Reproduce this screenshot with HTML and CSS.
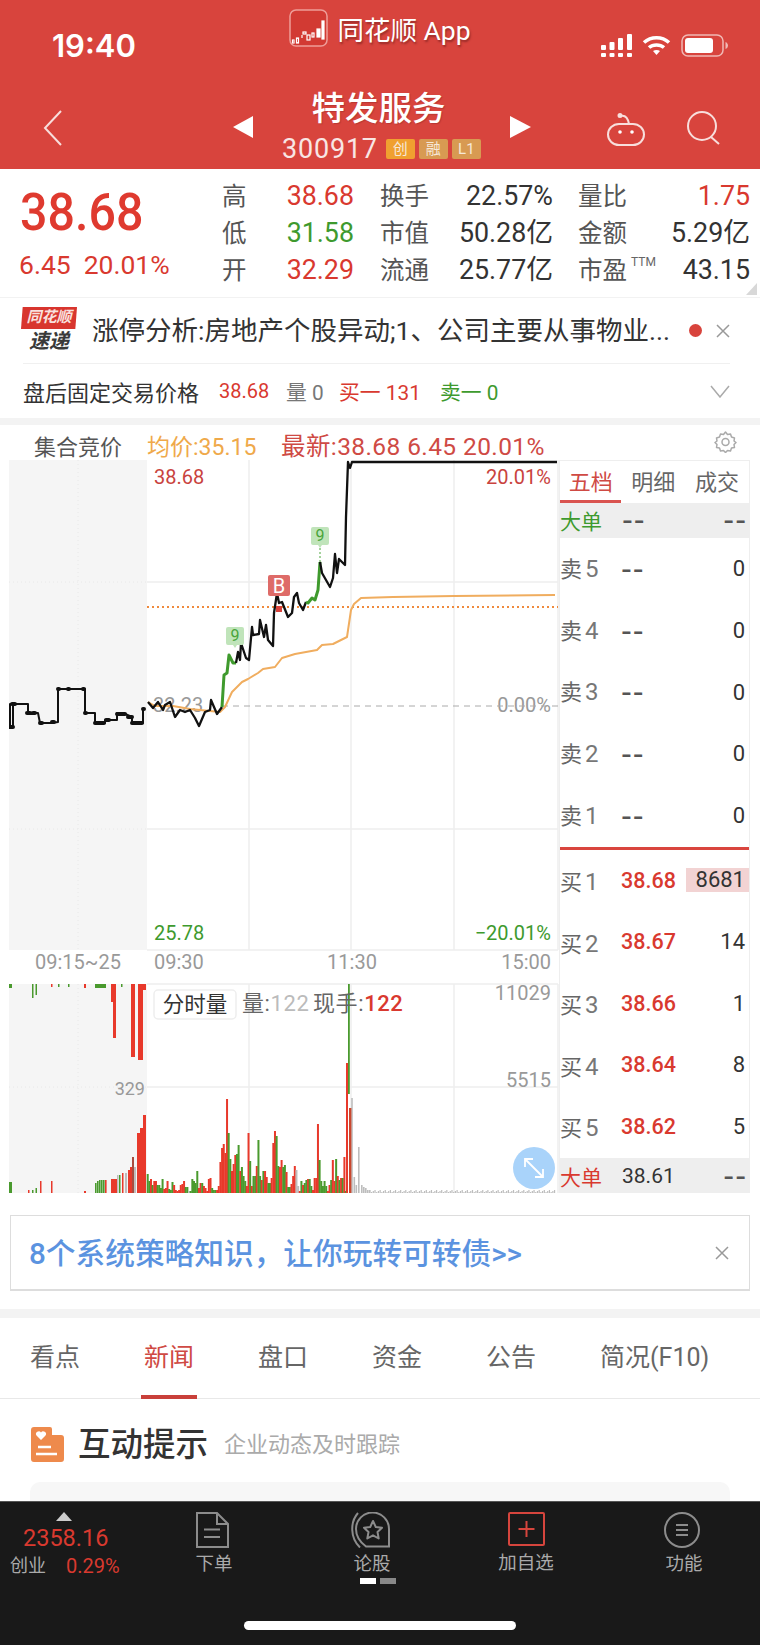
FILE: index.html
```html
<!DOCTYPE html>
<html lang="zh-CN">
<head>
    <meta charset="UTF-8">
    <meta name="viewport" content="width=device-width, initial-scale=1.0">
    <title>特发服务 300917</title>
    <link rel="stylesheet" href="styles.css">
</head>
<body>
    <header class="header">
        <div class="status">
            <div class="time">19:40</div>
            <div class="app-name">
                <svg class="app-logo" width="39" height="38" viewBox="0 0 39 38">
                    <rect x="1" y="1" width="37" height="36" rx="6" fill="#d23a33" stroke="#ee9d98" stroke-width="1.5"/>
                    <g fill="none" stroke="#fff" stroke-width="1.2">
                        <rect x="3.5" y="31" width="1.5" height="3"/>
                        <rect x="7.5" y="29" width="2" height="5"/>
                        <path d="M13 26v3"/>
                        <rect x="14" y="23" width="3" height="2"/>
                        <rect x="18" y="26" width="3" height="5"/>
                        <rect x="23" y="24" width="2" height="4"/>
                        <rect x="28" y="20" width="3" height="8" fill="#fff"/>
                        <rect x="33" y="12" width="2" height="18" fill="#fff"/>
                    </g>
                </svg>
                <span>同花顺 App</span>
            </div>
            <div class="status-icons">
                <svg width="31" height="23" viewBox="0 0 31 23" fill="#fff">
                    <rect x="0" y="11" width="5" height="5" rx="1"/>
                    <rect x="8.500" y="8" width="5" height="8" rx="1"/>
                    <rect x="17" y="4" width="5" height="12" rx="1"/>
                    <rect x="26" y="0" width="5" height="16" rx="1"/>
                    <rect x="0" y="19" width="5" height="4" rx="1"/>
                    <rect x="8.500" y="19" width="5" height="4" rx="1"/>
                    <rect x="17" y="19" width="5" height="4" rx="1"/>
                    <rect x="26" y="19" width="5" height="4" rx="1"/>
                </svg>
                <svg width="29" height="21" viewBox="0 0 29 21" fill="none" stroke="#fff" stroke-width="3.500">
                    <path d="M2 7.500c7-6.500 18-6.500 25 0"/>
                    <path d="M7 12.500c4-3.500 11-3.500 15 0"/>
                    <path d="M14.500 20l-3.500-4c2-1.500 5-1.500 7 0z" fill="#fff" stroke="none"/>
                </svg>
                <svg width="47" height="23" viewBox="0 0 47 23" fill="none">
                    <rect x="1" y="1" width="41" height="21" rx="6" stroke="#f0b8b4" stroke-width="1.500"/>
                    <rect x="4" y="4" width="28" height="15" rx="3" fill="#fff"/>
                    <path d="M44.500 8v7c1.500-.5 2.500-2 2.500-3.500s-1-3-2.500-3.500z" fill="#f0b8b4"/>
                </svg>
            </div>
        </div>
        <div class="nav">
            <svg class="nav-back" width="20" height="36" viewBox="0 0 20 36" fill="none" stroke="#f8dedc" stroke-width="2">
                <path d="M18 1L2 18l16 17"/>
            </svg>
            <div class="arrow-left"></div>
            <div class="stock-name">
                <div class="stock-title">特发服务</div>
                <div class="stock-code">
                    300917
                    <span class="tag tag-chuang">创</span>
                    <span class="tag">融</span>
                    <span class="tag">L1</span>
                </div>
            </div>
            <div class="arrow-right"></div>
            <svg class="nav-robot" width="38" height="33" viewBox="0 0 38 33" fill="none" stroke="#f8dedc" stroke-width="2">
                <rect x="1" y="11" width="36" height="21" rx="11"/>
                <path d="M14 3c5-1 7 3 8 8"/>
                <circle cx="13" cy="2.500" r="1.500" fill="#f8dedc"/>
                <circle cx="13" cy="19" r="1.800" fill="#fff" stroke="none"/>
                <circle cx="25" cy="19" r="1.800" fill="#fff" stroke="none"/>
            </svg>
            <svg class="nav-search" width="34" height="34" viewBox="0 0 34 34" fill="none" stroke="#f8dedc" stroke-width="2">
                <circle cx="15" cy="15" r="14"/>
                <path d="M24 26l8 7"/>
            </svg>
        </div>
    </header>

    <section class="quote">
        <div class="quote-main">
            <div class="price">38.68</div>
            <div class="change"><span>6.45</span><span>20.01%</span></div>
        </div>
        <div class="quote-col col-1">
            <div class="q-row"><span class="q-label">高</span><span class="red">38.68</span></div>
            <div class="q-row"><span class="q-label">低</span><span class="green">31.58</span></div>
            <div class="q-row"><span class="q-label">开</span><span class="red">32.29</span></div>
        </div>
        <div class="quote-col col-2">
            <div class="q-row"><span class="q-label">换手</span><span>22.57%</span></div>
            <div class="q-row"><span class="q-label">市值</span><span>50.28亿</span></div>
            <div class="q-row"><span class="q-label">流通</span><span>25.77亿</span></div>
        </div>
        <div class="quote-col col-3">
            <div class="q-row"><span class="q-label">量比</span><span class="red">1.75</span></div>
            <div class="q-row"><span class="q-label">金额</span><span>5.29亿</span></div>
            <div class="q-row"><span class="q-label">市盈<sup class="ttm">TTM</sup></span><span>43.15</span></div>
        </div>
        <div class="corner"></div>
    </section>

    <section class="news">
        <div class="news-logo">
            <div class="news-logo-top">同花顺</div>
            <div class="news-logo-bottom">速递</div>
        </div>
        <div class="news-text">涨停分析:房地产个股异动;1、公司主要从事物业...</div>
        <div class="news-dot"></div>
        <svg class="close-icon" width="14" height="14" viewBox="0 0 14 14" fill="none" stroke="#999" stroke-width="1.500">
            <path d="M1 1l12 12M13 1L1 13"/>
        </svg>
    </section>

    <section class="after-hours">
        <span class="ah-title">盘后固定交易价格</span>
        <span class="ah-price red">38.68</span>
        <span class="ah-vol">量 0</span>
        <span class="ah-buy red">买一 131</span>
        <span class="ah-sell green">卖一 0</span>
        <svg class="ah-chevron" width="20" height="13" viewBox="0 0 20 13" fill="none" stroke="#aaa" stroke-width="1.500">
            <path d="M1 1l9 11 9-11"/>
        </svg>
    </section>

    <div class="band band-top"></div>

    <section class="chart-head">
        <span class="ch-label">集合竞价</span>
        <span class="ch-avg">均价:35.15</span>
        <span class="ch-last">最新:38.68 6.45 20.01%</span>
        <svg class="gear" width="23" height="22" viewBox="0 0 23 22" fill="none" stroke="#aaa" stroke-width="1.500">
            <path d="M11.500 1l2 2.500 3-.5 1 3 3 1-.5 3 2 1.500-2 2 .5 3-3 .5-1 3-3-.5-2 2-2-2-3 .5-1-3-3-.5.5-3-2-2 2-1.500-.5-3 3-1 1-3 3 .5z" stroke-linejoin="round"/>
            <circle cx="11.500" cy="11" r="3.500"/>
        </svg>
    </section>

    <section class="market">
        <svg class="chart" width="550" height="733" viewBox="9 460 550 733">
            <!-- backgrounds -->
            <rect x="9" y="460" width="138" height="490" fill="#f5f5f5"/>
            <rect x="9" y="984" width="138" height="209" fill="#f5f5f5"/>
            <g stroke="#e8e8e8" stroke-width="1" stroke-dasharray="1 3">
                <path d="M78 460V950M78 984V1193M9 582H147M9 829H147M9 1087H147"/>
            </g>
            <g stroke="#eee" stroke-width="1.500" fill="none">
                <path d="M147 582H558M147 829H558M147 950H558M147 984H558M147 1087H558"/>
                <path d="M249 460V950M351 460V950M454 460V950M558 460V950"/>
                <path d="M249 984V1193M351 984V1193M454 984V1193M558 984V1193"/>
            </g>

            <text class="t-gray" x="153" y="712">32.23</text>
            <text class="t-gray" x="551" y="712" text-anchor="end">0.00%</text>
            <path d="M222 706H558" stroke="#aaa" stroke-width="1" stroke-dasharray="6 5"/>
            <path d="M147 607H558" stroke="#ef8a3c" stroke-width="2" stroke-dasharray="2 3"/>

            <path class="line-avg" d="M148 702L155 706L173 706L190 709L220 712L225 707L232 692L242 682L248 679L258 673L263 669L275 667L282 658L295 654L317 650L322 645L333 644L347 637L351 610L354 604L361 598L393 597L454 596L555 595"/>

            <path class="line-pre" d="M9 727H13V704H10V727M13 704H28V713H38L40 723H52L58 722V689H85V713H95V723H105V720H117V713H123L132 717V723H143V708"/>
            <path class="line-dots" d="M9 727h4M12 704h3M27 713h3M33 713h2M40 723h2M52 722h2M58 689h1M68 689h1M83 689h1M85 713h1M95 723h9M106 720h3M117 714h3M122 714h3M128 717h4M132 723h10M143 709h1"/>
            <path class="line-price" d="M148 702L153 708L158 702L163 710L165 705L170 702L175 717L180 710L185 712L190 710L195 718L199 726L205 712L210 710L211 700L217 714L222 707"/>
            <path class="line-green" d="M222 707L224 675L227 673L229 655L233 663L236 663"/>
            <path class="line-price" d="M236 663L238 652L240 660L241 643L246 658L249 660L252 627L253 635L259 634L260 620L264 637L266 625L268 640L273 646L274 613L277 593L279 603L282 602L284 607L288 617L292 613L294 597L297 593L299 603L303 610L306 602"/>
            <path class="line-green" d="M306 602L308 603L312 598L315 600L318 590L320 562"/>
            <path class="line-price" d="M320 562L322 573L330 587L333 578L335 554L337 573L339 559L345 565L346 517L348 462L350 468L352 462H557"/>

            <!-- markers -->
            <path d="M228 627h14a2 2 0 0 1 2 2v14a2 2 0 0 1-2 2h-5l-2 3-2-3h-5a2 2 0 0 1-2-2v-14a2 2 0 0 1 2-2z" fill="#c0e4ba"/>
            <text class="t-nine" x="235" y="641" text-anchor="middle">9</text>
            <path d="M313 527h14a2 2 0 0 1 2 2v14a2 2 0 0 1-2 2h-5l-2 3-2-3h-5a2 2 0 0 1-2-2v-14a2 2 0 0 1 2-2z" fill="#c0e4ba"/>
            <text class="t-nine" x="320" y="541" text-anchor="middle">9</text>
            <path d="M320 548V562" stroke="#4aa53a" stroke-width="1" stroke-dasharray="2 2"/>
            <rect x="276" y="606" width="6" height="6" fill="#d9433c"/>
            <rect x="268" y="575" width="22" height="21" rx="2" fill="#de6b68"/>
            <text class="t-b" x="279" y="593" text-anchor="middle">B</text>

            <text class="t-red" x="154" y="484">38.68</text>
            <text class="t-red" x="551" y="484" text-anchor="end">20.01%</text>
            <text class="t-green" x="154" y="940">25.78</text>
            <text class="t-green" x="551" y="940" text-anchor="end">−20.01%</text>

            <text class="t-time" x="35" y="969">09:15~25</text>
            <text class="t-time" x="154" y="969">09:30</text>
            <text class="t-time" x="352" y="969" text-anchor="middle">11:30</text>
            <text class="t-time" x="551" y="969" text-anchor="end">15:00</text>

            <g id="vol-bars"></g>

            <text class="t-gray" x="551" y="1000" text-anchor="end">11029</text>
            <text class="t-gray" x="551" y="1087" text-anchor="end">5515</text>
            <text class="t-gray t-small" x="145" y="1095" text-anchor="end">329</text>

            <rect x="154" y="990" width="82" height="29" rx="4" fill="#fff" stroke="#eee" stroke-width="1.500"/>
            <text class="t-vol-title" x="195" y="1012" text-anchor="middle">分时量</text>
            <text class="t-vol" x="242" y="1011">量:<tspan class="t-vol-light">122</tspan></text>
            <text class="t-vol" x="313" y="1011">现手:<tspan class="t-vol-red">122</tspan></text>

            <circle cx="534" cy="1168" r="21" fill="#a9d3fa"/>
            <g fill="none" stroke="#fff" stroke-width="1.800">
                <path d="M526 1160L542 1176M525 1167V1159H533M543 1169V1177H535"/>
            </g>
        </svg>

        <div class="book">
            <div class="book-tabs">
                <span class="book-tab active">五档</span>
                <span class="book-tab">明细</span>
                <span class="book-tab">成交</span>
            </div>
            <div class="big-row">
                <span class="big-label green">大单</span>
                <span class="dash">--</span>
                <span class="dash">--</span>
            </div>
            <div class="book-side sell">
                <div class="level"><span class="lv-name">卖<i>5</i></span><span class="dash">--</span><span class="lv-qty">0</span></div>
                <div class="level"><span class="lv-name">卖<i>4</i></span><span class="dash">--</span><span class="lv-qty">0</span></div>
                <div class="level"><span class="lv-name">卖<i>3</i></span><span class="dash">--</span><span class="lv-qty">0</span></div>
                <div class="level"><span class="lv-name">卖<i>2</i></span><span class="dash">--</span><span class="lv-qty">0</span></div>
                <div class="level"><span class="lv-name">卖<i>1</i></span><span class="dash">--</span><span class="lv-qty">0</span></div>
            </div>
            <div class="book-divider"></div>
            <div class="book-side buy">
                <div class="level"><span class="lv-name">买<i>1</i></span><span class="lv-price red">38.68</span><span class="lv-qty lv-hot">8681</span></div>
                <div class="level"><span class="lv-name">买<i>2</i></span><span class="lv-price red">38.67</span><span class="lv-qty">14</span></div>
                <div class="level"><span class="lv-name">买<i>3</i></span><span class="lv-price red">38.66</span><span class="lv-qty">1</span></div>
                <div class="level"><span class="lv-name">买<i>4</i></span><span class="lv-price red">38.64</span><span class="lv-qty">8</span></div>
                <div class="level"><span class="lv-name">买<i>5</i></span><span class="lv-price red">38.62</span><span class="lv-qty">5</span></div>
            </div>
            <div class="big-row big-row-end">
                <span class="big-label red">大单</span>
                <span class="big-num">38.61</span>
                <span class="dash">--</span>
            </div>
        </div>
    </section>

    <section class="promo">
        <span class="promo-text">8个系统策略知识，让你玩转可转债&gt;&gt;</span>
        <svg class="close-icon" width="14" height="14" viewBox="0 0 14 14" fill="none" stroke="#999" stroke-width="1.500">
            <path d="M1 1l12 12M13 1L1 13"/>
        </svg>
    </section>

    <div class="band band-mid"></div>

    <nav class="tabs">
        <div class="tab"><span>看点</span></div>
        <div class="tab active"><span>新闻</span></div>
        <div class="tab"><span>盘口</span></div>
        <div class="tab"><span>资金</span></div>
        <div class="tab"><span>公告</span></div>
        <div class="tab"><span>简况(F10)</span></div>
    </nav>

    <section class="hint">
        <svg width="33" height="35" viewBox="0 0 33 35">
            <path d="M3 0H19a2 2 0 0 1 2 2V8H30a3 3 0 0 1 3 3V32a3 3 0 0 1-3 3H3a3 3 0 0 1-3-3V3a3 3 0 0 1 3-3z" fill="#ee8a4c"/>
            <path d="M10 13L5.500 8.500a2.600 2.600 0 0 1 4.500-3 2.600 2.600 0 0 1 4.500 3z" fill="#fff"/>
            <path d="M7 20H20M5 27H26" stroke="#fff" stroke-width="2.500"/>
        </svg>
        <span class="hint-title">互动提示</span>
        <span class="hint-sub">企业动态及时跟踪</span>
    </section>
    <div class="hint-card"></div>

    <footer class="footer">
        <div class="footer-row">
            <div class="index">
                <div class="index-up"></div>
                <div class="index-value">2358.16</div>
                <div class="index-line"><span>创业</span><span class="index-pct">0.29%</span></div>
            </div>
            <div class="foot-item">
                <svg class="foot-shift" width="35" height="36" viewBox="0 0 35 36" fill="none" stroke="#8c8c8c" stroke-width="2">
                    <path d="M2 1H22L33 12V35H2Z"/>
                    <path d="M22 1V12H33"/>
                    <path d="M9 17.500H25M9 25H25"/>
                </svg>
                <span>下单</span>
            </div>
            <div class="foot-item">
                <svg class="foot-shift" width="40" height="36" viewBox="0 0 40 36" fill="none" stroke="#8c8c8c" stroke-width="2">
                    <path d="M39 34.500V17A16.500 16.500 0 0 0 6 17C6 24 10 30 16 34.500H39Z"/>
                    <path d="M8 1C0 10 0 26 10 35.500"/>
                    <path d="M23 9L25.800 15 32 15.800 27.500 20 28.700 26.500 23 23.300 17.300 26.500 18.500 20 14 15.800 20.200 15Z" stroke-linejoin="round"/>
                </svg>
                <span>论股</span>
                <div class="pager"><i class="on"></i><i></i></div>
            </div>
            <div class="foot-item foot-add">
                <svg width="37" height="35" viewBox="0 0 37 35" fill="none" stroke="#d6453d" stroke-width="2">
                    <rect x="1" y="1" width="35" height="32" rx="1"/>
                    <path d="M18.500 9V25M10.500 17H26.500"/>
                </svg>
                <span>加自选</span>
            </div>
            <div class="foot-item foot-func">
                <svg class="foot-shift" width="36" height="36" viewBox="0 0 36 36" fill="none" stroke="#8c8c8c" stroke-width="2">
                    <circle cx="18" cy="18" r="17"/>
                    <path d="M12 13H24M12 18H24M12 23H24"/>
                </svg>
                <span>功能</span>
            </div>
        </div>
        <div class="home-bar"></div>
    </footer>

    <script src="chart.js"></script>
</body>
</html>
```
FILE: styles.css
```css
* {
    box-sizing: border-box;
}
body {
    margin: 0;
    width: 760px;
    height: 1645px;
    overflow: hidden;
    background: #fff;
    color: #333;
    font-family: Roboto, "Noto Sans CJK SC", sans-serif;
}
.red {
    color: #d9392f;
}
.green {
    color: #3e9a2e;
}

/* header */
.header {
    height: 169px;
    background: #d8443d;
    color: #fff;
}
.status {
    height: 92px;
    display: grid;
    grid-template-columns: 1fr auto 1fr;
}
.time {
    padding: 31px 0 0 52px;
    font-family: Inter, sans-serif;
    font-size: 31px;
    font-weight: 600;
    line-height: 30px;
}
.app-name {
    display: flex;
    align-items: center;
    gap: 9px;
    height: 38px;
    margin-top: 9px;
    font-size: 26.500px;
    text-shadow: 1px 2px 2px rgba(90, 20, 20, .5);
}
.status-icons {
    display: flex;
    justify-content: flex-end;
    align-items: center;
    gap: 10px;
    height: 23px;
    margin-top: 34px;
    padding-right: 32px;
}
.nav {
    height: 77px;
    display: flex;
    align-items: flex-start;
}
.nav-back {
    margin: 18px 170px 0 43px;
}
.arrow-left,
.arrow-right {
    width: 0;
    height: 0;
    margin-top: 24px;
    border-top: 11px solid transparent;
    border-bottom: 11px solid transparent;
}
.arrow-left {
    border-right: 20px solid #fff;
}
.arrow-right {
    border-left: 21px solid #fff;
}
.stock-name {
    width: 257px;
    text-align: center;
}
.stock-title {
    height: 33px;
    margin-left: -6px;
    font-size: 33.500px;
    font-weight: 500;
    line-height: 33px;
    text-shadow: 1px 1px 1px rgba(90, 20, 20, .25);
}
.stock-code {
    display: flex;
    align-items: center;
    height: 24px;
    margin: 12px 0 0 29px;
    font-size: 27px;
    letter-spacing: .8px;
    color: #f8e6e4;
}
.tag {
    width: 29px;
    height: 20px;
    margin-left: 4px;
    background: #d89a52;
    border-radius: 2px;
    color: #f6e8d8;
    font-size: 15px;
    line-height: 20px;
    letter-spacing: 0;
}
.tag-chuang {
    margin-left: 8px;
    background: #f0a030;
}
.nav-robot {
    margin: 21px 0 0 76px;
}
.nav-search {
    margin: 19px 0 0 42px;
}

/* quote */
.quote {
    position: relative;
    height: 128px;
    display: flex;
    padding: 9px 10px 0 0;
    font-size: 26.800px;
    line-height: 37px;
    color: #333;
}
.quote-main {
    width: 222px;
    padding-left: 20px;
}
.price {
    height: 58px;
    padding-top: 7px;
    font-size: 52px;
    font-weight: 500;
    line-height: 56px;
    color: #df3a2f;
    transform: scaleX(.93);
    transform-origin: left center;
}
.change {
    display: flex;
    gap: 13px;
    margin: 14px 0 0 -1px;
    font-size: 26.500px;
    line-height: 30px;
    color: #d9392f;
}
.quote-col {
    display: flex;
    flex-direction: column;
}
.col-1 {
    width: 132px;
}
.col-2 {
    width: 173px;
    margin-left: 26px;
}
.col-3 {
    width: 172px;
    margin-left: 25px;
}
.q-row {
    display: flex;
    justify-content: space-between;
    height: 37px;
}
.q-label {
    font-size: 24.500px;
    color: #555;
}
.ttm {
    margin-left: 4px;
    font-size: 12px;
    line-height: 0;
    vertical-align: 13px;
    color: #666;
}
.corner {
    position: absolute;
    right: 3px;
    bottom: 2px;
    width: 11px;
    height: 12px;
    background: #d8d8d8;
    clip-path: polygon(100% 0, 100% 100%, 0 100%);
}

/* news ticker */
.news {
    height: 66px;
    display: flex;
    align-items: center;
    padding: 0 30px 0 21px;
    border-top: 1px solid #f2f2f2;
}
.news-logo {
    width: 56px;
    height: 46px;
    margin-top: -1px;
    text-align: center;
    font-style: italic;
    font-weight: 700;
}
.news-logo-top {
    height: 22px;
    background: #d8352e;
    clip-path: polygon(3% 0, 100% 0, 97% 100%, 0 100%);
    color: #f8e0de;
    font-size: 15px;
    line-height: 21px;
}
.news-logo-bottom {
    height: 24px;
    color: #3a3a3a;
    font-size: 20px;
    line-height: 25px;
}
.news-text {
    width: 578px;
    margin-left: 15px;
    font-size: 26.500px;
    line-height: 34px;
    white-space: nowrap;
    color: #333;
}
.news-dot {
    width: 13px;
    height: 13px;
    margin-left: 19px;
    background: #d8433c;
    border-radius: 50%;
}
.close-icon {
    margin-left: auto;
}

/* after hours row */
.after-hours {
    height: 55px;
    display: flex;
    align-items: center;
    margin: 0 30px 0 23px;
    border-top: 1px solid #f0f0f0;
    font-size: 20.800px;
    white-space: nowrap;
}
.ah-title {
    width: 196px;
    font-size: 22px;
    color: #333;
}
.ah-price {
    width: 67px;
    font-size: 20px;
}
.ah-vol {
    width: 53px;
    color: #777;
}
.ah-buy {
    width: 101px;
}
.ah-chevron {
    margin-left: auto;
}
.band {
    background: #f3f3f3;
}
.band-top {
    height: 7px;
}

/* chart header */
.chart-head {
    height: 35px;
    display: flex;
    align-items: center;
    padding: 4px 23px 0 34px;
    white-space: nowrap;
}
.ch-label {
    width: 113px;
    font-size: 22px;
    color: #555;
}
.ch-avg {
    width: 134px;
    font-size: 23px;
    color: #efa94a;
}
.ch-last {
    font-size: 24.500px;
    letter-spacing: .4px;
    color: #cf4a44;
}
.gear {
    margin: -6px 0 0 auto;
}

/* chart */
.market {
    display: flex;
    height: 733px;
    padding-left: 9px;
}
.chart {
    display: block;
    flex: none;
}
.chart text {
    font-size: 20px;
}
.chart .t-gray {
    fill: #999;
}
.chart .t-small {
    font-size: 18px;
}
.chart .t-time {
    fill: #999;
}
.chart .t-red {
    fill: #c9433e;
}
.chart .t-green {
    fill: #3e9a2e;
}
.chart .t-nine {
    font-size: 16px;
    fill: #4aa53a;
}
.chart .t-b {
    font-size: 20px;
    fill: #fff;
}
.chart .t-vol-title {
    font-size: 21.500px;
    fill: #333;
}
.chart .t-vol {
    font-size: 22px;
    letter-spacing: .6px;
    fill: #666;
}
.t-vol-light {
    fill: #bbb;
}
.t-vol-red {
    fill: #d9392f;
    font-weight: 500;
}
.line-pre,
.line-dots,
.line-price,
.line-green,
.line-avg {
    fill: none;
    stroke-linejoin: round;
}
.line-pre {
    stroke: #111;
    stroke-width: 2;
}
.line-dots {
    stroke: #111;
    stroke-width: 4;
    stroke-linecap: round;
}
.line-price {
    stroke: #111;
    stroke-width: 2.300;
}
.line-green {
    stroke: #3f9a2d;
    stroke-width: 3;
}
.line-avg {
    stroke: #f0ad5f;
    stroke-width: 2;
}

/* order book */
.book {
    width: 191px;
    height: 733px;
    display: flex;
    flex-direction: column;
    border-left: 1px solid #eee;
    border-right: 1px solid #eee;
    border-top: 1px solid #eee;
}
.book-tabs {
    display: flex;
    height: 42px;
    font-size: 22px;
    line-height: 44px;
    color: #666;
}
.book-tab {
    width: 64.500px;
    text-align: center;
}
.book-tab:first-child {
    width: 62px;
    border-bottom: 3px solid #d9534f;
    color: #cf4a44;
}
.big-row {
    display: grid;
    grid-template-columns: 62px 1fr auto;
    align-items: center;
    height: 35px;
    padding-right: 2px;
    background: #eee;
}
.big-label {
    font-size: 21px;
}
.big-num {
    font-size: 21px;
    color: #333;
}
.dash {
    font-family: "DejaVu Sans", sans-serif;
    font-size: 30px;
    line-height: 26px;
    letter-spacing: 1px;
    color: #555;
}
.book-side {
    height: 309px;
    display: flex;
    flex-direction: column;
}
.book-side.buy {
    height: 308px;
}
.level {
    flex: 1;
    display: grid;
    grid-template-columns: 61px 1fr auto;
    align-items: center;
    padding-right: 4px;
}
.lv-name {
    font-size: 22px;
    color: #666;
}
.sell .lv-name {
    margin-top: -4px;
}
.lv-name i {
    margin-left: 3px;
    font-size: 24px;
    font-style: normal;
    color: #777;
}
.lv-price {
    font-size: 21.500px;
    font-weight: 500;
}
.lv-qty {
    font-size: 22px;
    color: #333;
}
.lv-hot {
    width: 63px;
    height: 24px;
    margin-right: -4px;
    padding-right: 4px;
    background: #f2d3d3;
    line-height: 24px;
    text-align: right;
}
.book-divider {
    height: 3px;
    background: #d9453e;
}
.big-row-end {
    margin-top: 1px;
}

/* promo */
.promo {
    height: 76px;
    display: flex;
    align-items: center;
    margin: 22px 10px 0;
    padding: 0 20px 0 18px;
    border: 1px solid #ddd;
    border-bottom-width: 2px;
}
.promo-text {
    margin-top: -2px;
    font-size: 29.700px;
    font-weight: 500;
    color: #5b93e0;
    white-space: nowrap;
}
.band-mid {
    height: 9px;
    margin-top: 18px;
}

/* tabs */
.tabs {
    height: 81px;
    display: flex;
    padding-left: 30px;
    border-bottom: 1px solid #e8e8e8;
}
.tab {
    width: 114px;
    font-size: 25px;
    line-height: 80px;
    color: #666;
    white-space: nowrap;
}
.tab span {
    display: inline-block;
    height: 81px;
    margin-left: -3px;
    padding: 0 3px;
}
.tab.active span {
    border-bottom: 4px solid #c9403a;
    color: #cf4a44;
}

/* hint */
.hint {
    display: flex;
    align-items: center;
    height: 35px;
    margin-top: 28px;
    padding-left: 31px;
}
.hint-title {
    margin: 0 0 6px 14px;
    font-size: 32.500px;
    font-weight: 500;
    color: #333;
}
.hint-sub {
    margin: 0 0 6px 16px;
    font-size: 22px;
    color: #aaa;
}
.hint-card {
    height: 19px;
    margin: 20px 30px 0;
    background: #f7f7f7;
    border-radius: 10px 10px 0 0;
}

/* footer */
.footer {
    height: 144px;
    background: #191919;
    border-top: 1px solid #555;
}
.footer-row {
    height: 119px;
    display: flex;
    color: #aaa;
}
.index {
    width: 135px;
    padding: 10px 0 0 10px;
}
.index-up {
    width: 0;
    height: 0;
    margin-left: 46px;
    border-left: 8px solid transparent;
    border-right: 8px solid transparent;
    border-bottom: 9px solid #ccc;
}
.index-value {
    margin: 2px 0 0 13px;
    font-size: 23.500px;
    line-height: 30px;
    color: #d9392f;
}
.index-line {
    display: flex;
    gap: 20px;
    font-size: 18px;
    line-height: 26px;
}
.index-pct {
    font-size: 20px;
    color: #d9392f;
}
.foot-item {
    width: 158px;
    display: flex;
    flex-direction: column;
    align-items: center;
    padding-top: 10px;
    font-size: 18.500px;
}
.foot-shift {
    margin-left: -4px;
}
.foot-item span {
    margin-top: 2px;
    line-height: 28px;
}
.foot-add {
    width: 150px;
}
.foot-func {
    width: 159px;
    padding-left: 7px;
}
.pager {
    display: flex;
    gap: 4px;
    margin: 0 0 0 12px;
}
.pager i {
    width: 16px;
    height: 6px;
    background: #888;
}
.pager i.on {
    background: #fff;
}
.home-bar {
    width: 272px;
    height: 9px;
    margin: 0 auto;
    background: #fff;
    border-radius: 5px;
}
```
FILE: chart.js
```js
// Volume bars for the intraday chart. Heights are in px above the baseline.
const baseline = 1193;
const RED = '#e8392b';
const GREEN = '#4a9a2e';
const GRAY = '#bdbdbd';

const session = [
    ['G', [19, 12]], ['R', [14]], ['G', [8]], ['R', [12, 12]], ['G', [8, 8, 5, 14]], ['R', [4, 5, 12]],
    ['G', [4, 3, 11]], ['R', [8, 3, 2, 3, 8, 9, 12]], ['G', [6, 6]], ['K', [2]], ['G', [2, 14, 12, 10, 22]],
    ['R', [5, 10]], ['G', [10]], ['R', [7, 5, 2, 14, 15]], ['G', [5, 3, 3]], ['R', [3, 7]],
    ['R', [31, 45, 49, 40, 94]], ['G', [60, 34]], ['R', [22, 29, 38]], ['G', [39, 48]], ['R', [22]],
    ['G', [26, 17, 12]], ['R', [7, 60]], ['G', [32]], ['R', [7]], ['G', [17, 17]], ['R', [27]], ['G', [53]],
    ['G', [17]], ['R', [13]], ['G', [22]], ['R', [22, 16]], ['G', [10, 10]], ['R', [15, 50, 62]], ['G', [57, 27]],
    ['R', [26, 33]], ['G', [26, 28]], ['R', [21]], ['G', [6, 6]], ['R', [9, 17, 27]], ['K', [23, 7]], ['R', [2]],
    ['G', [12]], ['R', [8]], ['G', [10, 13]], ['R', [14]], ['G', [14, 7]], ['R', [3, 15, 15, 69]],
    ['G', [33, 12, 7, 12, 7]], ['R', [2, 8]], ['G', [13]], ['R', [33, 12]], ['G', [34]], ['R', [17]], ['G', [13]],
    ['R', [15]], ['G', [15]], ['R', [36]], ['G', [2]]
];

// pre-market bars: x, width, height, colour
const preMarket = [
    [9, 3, 11, GREEN], [28, 1.5, 3, RED], [32, 1.5, 3, GREEN], [35.5, 1.5, 5, GREEN], [40, 1.5, 12, RED],
    [51, 1.5, 12, RED], [84, 2, 2, RED], [95, 1.6, 10, GREEN], [97, 1.6, 12, GREEN], [99, 1.6, 13, GREEN],
    [101, 1.6, 13, GREEN], [103, 1.6, 13, GREEN], [105, 1.6, 13, RED], [111, 6, 14, RED], [117, 1.5, 18, GRAY],
    [119, 1.5, 18, GREEN], [122, 1.5, 20, RED], [125, 2, 20, GRAY], [128, 2, 23, RED], [130, 2, 26, RED],
    [132, 2, 36, '#a94c3f'], [134, 2, 26, GRAY], [137, 3, 60, RED], [140, 3, 65, RED], [143, 3, 78, RED]
];

const preTop = [
    [9, 3, 4, GREEN], [32, 1.5, 14, GREEN], [35.5, 1.5, 11, GREEN], [51, 1.5, 3, RED], [58, 1.5, 3, GREEN],
    [68, 1.5, 3, GREEN], [84, 2, 4, RED], [95, 11, 4, GREEN], [111, 2, 18, RED], [113, 3, 54, RED],
    [121, 1.5, 3, GREEN], [131, 4, 73, RED], [138, 5, 76, RED], [143, 3, 6, RED]
];

const ns = 'http://www.w3.org/2000/svg';
const group = document.getElementById('vol-bars');

function addBar(x, y, width, height, fill) {
    const bar = document.createElementNS(ns, 'rect');
    bar.setAttribute('x', x);
    bar.setAttribute('y', y);
    bar.setAttribute('width', width);
    bar.setAttribute('height', height);
    bar.setAttribute('fill', fill);
    group.appendChild(bar);
}

preMarket.forEach(b => addBar(b[0], baseline - b[2], b[1], b[2], b[3]));
preTop.forEach(b => addBar(b[0], 984, b[1], b[2], b[3]));

const colours = { R: RED, G: GREEN, K: GRAY };
let x = 146.7;
session.forEach(run => {
    run[1].forEach(h => {
        addBar(x, baseline - h, 2, h, colours[run[0]]);
        x += 1.653;
    });
});

addBar(346, 1063, 2, 130, RED);
addBar(351.2, 1098, 1.6, 95, GRAY);
addBar(349, 1108, 2.4, 85, '#c9482f');
addBar(348, 984, 1.8, 110, GREEN);
[[353.5, 16], [355.5, 8], [358, 46], [361, 8], [363, 6], [365, 5], [367, 3], [369, 3]].forEach(b => {
    addBar(b[0], baseline - b[1], 1.6, b[1], GRAY);
});

// thin trades for the rest of the day
for (let i = 0; i < 108; i++) {
    const h = 1 + (i * 7) % 3;
    addBar(371 + i * 1.71, baseline - h, 1.2, h, GRAY);
}
```
